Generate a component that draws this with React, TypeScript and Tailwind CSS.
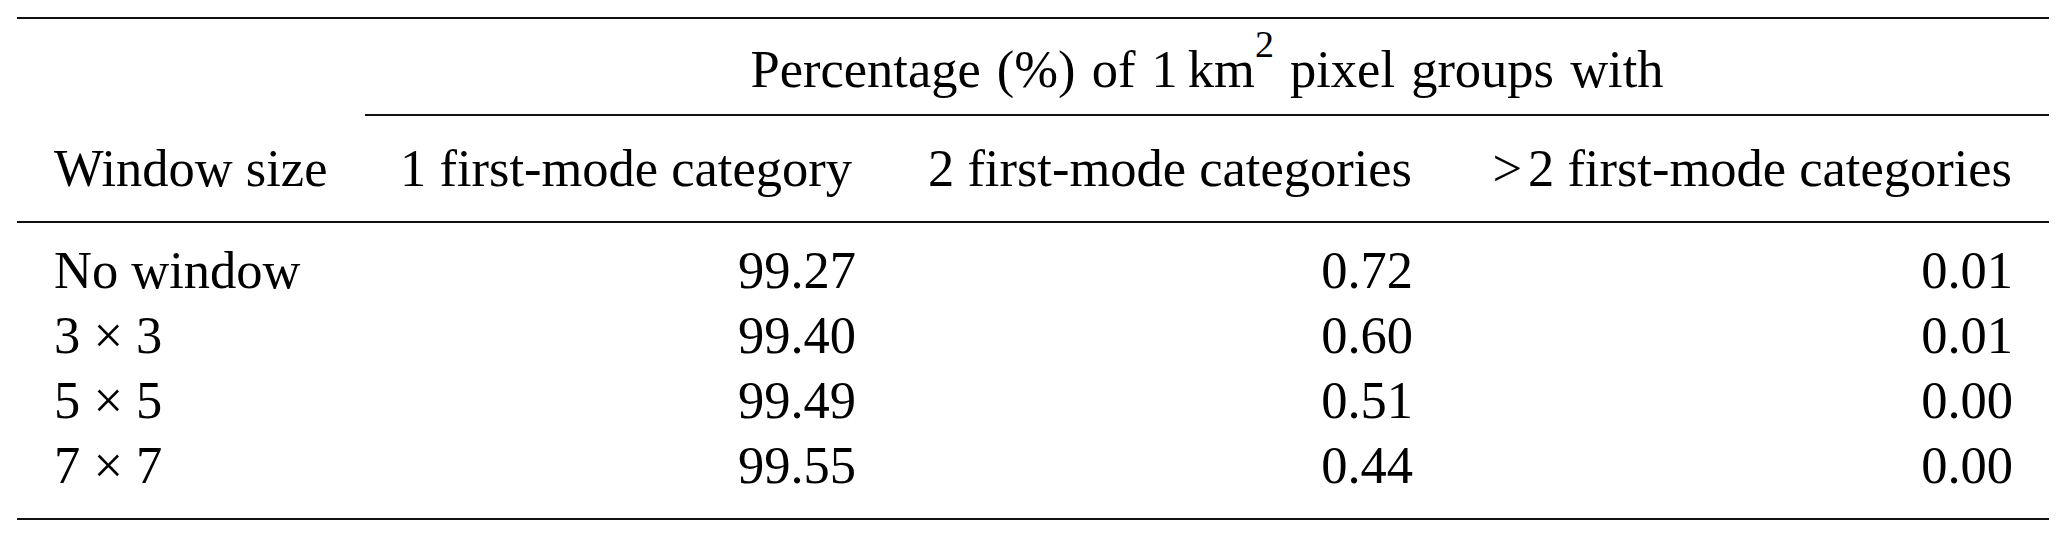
import React from "react";

const rows: [string, string, string, string][] = [
  ["No window", "99.27", "0.72", "0.01"],
  ["3 × 3", "99.40", "0.60", "0.01"],
  ["5 × 5", "99.49", "0.51", "0.00"],
  ["7 × 7", "99.55", "0.44", "0.00"],
];

const cols = "grid grid-cols-[348px_525px_560px_599px]";

export default function App() {
  return (
    <div className="min-h-[539px] w-[2067px] bg-white pl-[17px] pt-[17px] font-['Liberation_Serif'] text-[52.5px] leading-[65px] text-black">
      <div className="w-[2032px]">
        <div className="h-[2px] bg-[#111]" />

        <div className="mt-[18px] grid grid-cols-[348px_1684px]">
          <div />
          <div className="whitespace-nowrap text-center [word-spacing:3px]">
            Percentage (%) of 1<span className="ml-[10px]">km</span>
            <sup className="top-[-30px] text-[38px]">2</sup> pixel groups with
          </div>
        </div>

        <div className="ml-[348px] mt-[12px] h-[2px] bg-[#111]" />

        <div className={`${cols} mt-[20px] whitespace-nowrap`}>
          <div className="pl-[37px]">Window size</div>
          <div className="pr-[38px] text-right">1 first-mode category</div>
          <div className="pr-[38px] text-right">2 first-mode categories</div>
          <div className="pr-[37px] text-right">
            <span className="mr-[6px]">&gt;</span>2 first-mode categories
          </div>
        </div>

        <div className="mt-[20px] h-[2px] bg-[#111]" />

        <div className="mt-[15px]">
          {rows.map((r) => (
            <div key={r[0]} className={`${cols} whitespace-nowrap`}>
              <div className="pl-[37px]">{r[0]}</div>
              <div className="pr-[34px] text-right">{r[1]}</div>
              <div className="pr-[37px] text-right">{r[2]}</div>
              <div className="pr-[36px] text-right">{r[3]}</div>
            </div>
          ))}
        </div>

        <div className="mt-[20px] h-[2px] bg-[#111]" />
      </div>
    </div>
  );
}
